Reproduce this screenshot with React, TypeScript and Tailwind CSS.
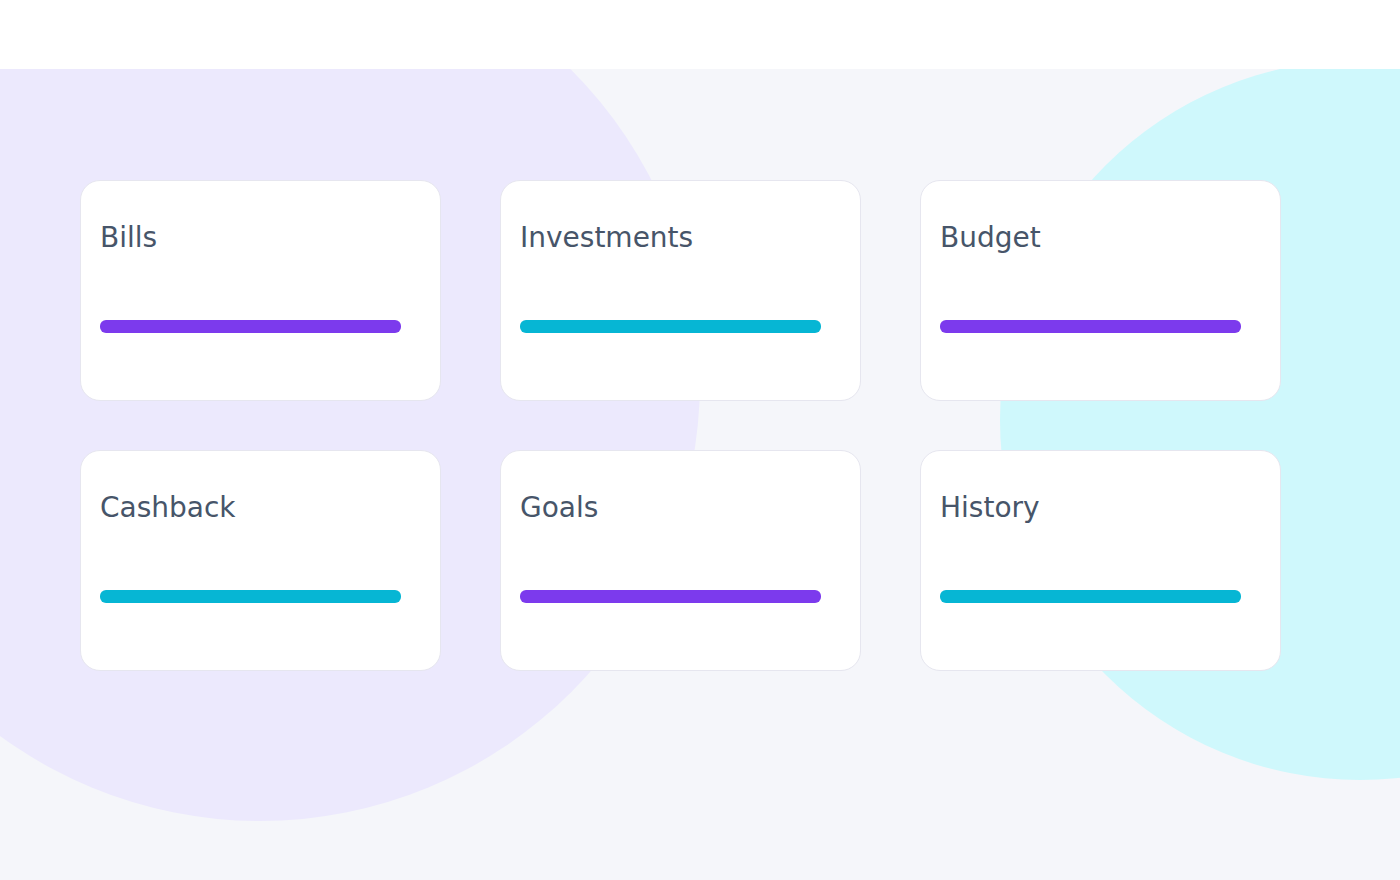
import React from "react";

const cards: { title: string; color: "violet" | "cyan" }[] = [
  { title: "Bills", color: "violet" },
  { title: "Investments", color: "cyan" },
  { title: "Budget", color: "violet" },
  { title: "Cashback", color: "cyan" },
  { title: "Goals", color: "violet" },
  { title: "History", color: "cyan" },
];

export default function App() {
  return (
    <div
      className="w-[1400px] h-[880px] flex flex-col bg-white overflow-hidden"
      style={{ fontFamily: '"DejaVu Sans", sans-serif' }}
    >
      <header className="h-[69px] shrink-0 bg-white" />
      <main className="relative flex-1 overflow-hidden bg-[#f5f6fa]">
        <div className="absolute left-[-180px] top-[-128px] w-[880px] h-[880px] rounded-full bg-[#ece9fd]" />
        <div className="absolute left-[1000px] top-[-9px] w-[720px] h-[720px] rounded-full bg-[#cff8fc]" />
        <div className="relative pl-[80px] pt-[111px] grid grid-cols-[repeat(3,361px)] gap-x-[59px] gap-y-[49px]">
          {cards.map((c) => (
            <div
              key={c.title}
              className="h-[221px] rounded-[20px] border border-[#e6e6ef] bg-white px-[19px] pt-[41px]"
            >
              <div className="text-[28px] leading-[32px] text-[#475569]">{c.title}</div>
              <div
                className={
                  "mt-[66px] h-[13px] w-[301px] rounded-[6px] " +
                  (c.color === "violet" ? "bg-[#7c3aed]" : "bg-[#06b6d4]")
                }
              />
            </div>
          ))}
        </div>
      </main>
    </div>
  );
}
